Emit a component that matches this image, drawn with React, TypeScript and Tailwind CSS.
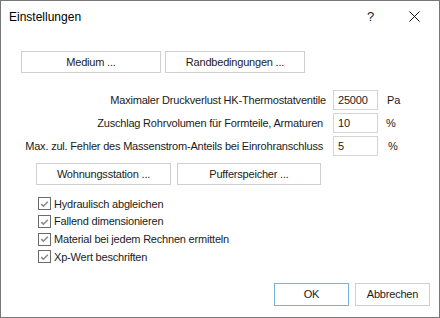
import { ReactNode } from "react";

function Btn({ w, h = 22, children, primary = false }: { w: number; h?: number; children: ReactNode; primary?: boolean }) {
  return (
    <button
      className={
        "flex items-center justify-center bg-white text-[#1b1b1b] " +
        (primary ? "border border-[#72b4dc]" : "border border-[#d0d0d0]")
      }
      style={{ width: w, height: h }}
    >
      {children}
    </button>
  );
}

function Field({ label, value, unit, labelPad = 0, unitPad = 9 }: { label: string; value: string; unit: string; labelPad?: number; unitPad?: number }) {
  return (
    <div className="flex items-center h-[20px]">
      <div className="w-[325px] text-right" style={{ paddingRight: labelPad }}>
        {label}
      </div>
      <div className="ml-[7px] w-[45px] h-[20px] border border-[#d4d4d4] flex items-center pl-[4px] text-[#1b1b1b]">{value}</div>
      <div style={{ marginLeft: unitPad }}>{unit}</div>
    </div>
  );
}

function Check({ label }: { label: string }) {
  return (
    <label className="flex items-center gap-[3px] h-[17.7px]">
      <span className="w-[13px] h-[13px] border border-[#6a6a6a] flex items-center justify-center bg-white">
        <svg width="9" height="8" viewBox="0 0 9 8">
          <path d="M1.2 4.2 L3.4 6.2 L7.8 1.8" fill="none" stroke="#8a8a8a" strokeWidth="1.6" />
        </svg>
      </span>
      <span>{label}</span>
    </label>
  );
}

export default function App() {
  return (
    <div
      className="w-[440px] h-[318px] bg-white border border-[#777777] flex flex-col text-[11px] tracking-[-0.2px] text-[#1b1b1b]"
      style={{ fontFamily: '"Liberation Sans", Arial, sans-serif' }}
    >
      {/* title bar */}
      <div className="flex items-center h-[31px] pl-[8px] shrink-0 tracking-normal">
        <span className="text-[12px] flex-1 text-[#000]">Einstellungen</span>
        <span className="text-[13px] w-[12px] mr-[30px]">?</span>
        <svg width="11" height="11" viewBox="0 0 11 11" className="mr-[19px]">
          <path d="M0.5 0.5 L10.5 10.5 M10.5 0.5 L0.5 10.5" stroke="#111" strokeWidth="1" />
        </svg>
      </div>

      <div className="flex gap-[4px] pl-[20px] mt-[19px]">
        <Btn w={140}>Medium ...</Btn>
        <Btn w={140}>Randbedingungen ...</Btn>
      </div>

      <div className="flex flex-col gap-[3px] mt-[17px]">
        <Field label="Maximaler Druckverlust HK-Thermostatventile" value="25000" unit="Pa" />
        <Field label="Zuschlag Rohrvolumen für Formteile, Armaturen" value="10" unit="%" labelPad={3} unitPad={8} />
        <Field label="Max. zul. Fehler des Massenstrom-Anteils bei Einrohranschluss" value="5" unit="%" labelPad={3} unitPad={10} />
      </div>

      <div className="flex gap-[6px] pl-[35px] mt-[7px]">
        <Btn w={135}>Wohnungsstation ...</Btn>
        <Btn w={144}>Pufferspeicher ...</Btn>
      </div>

      <div className="flex flex-col pl-[37px] mt-[10px]">
        <Check label="Hydraulisch abgleichen" />
        <Check label="Fallend dimensionieren" />
        <Check label="Material bei jedem Rechnen ermitteln" />
        <Check label="Xp-Wert beschriften" />
      </div>

      <div className="flex justify-end gap-[6px] pr-[9px] mt-auto mb-[11px]">
        <Btn w={75} h={23} primary>OK</Btn>
        <Btn w={75} h={23}>Abbrechen</Btn>
      </div>
    </div>
  );
}
